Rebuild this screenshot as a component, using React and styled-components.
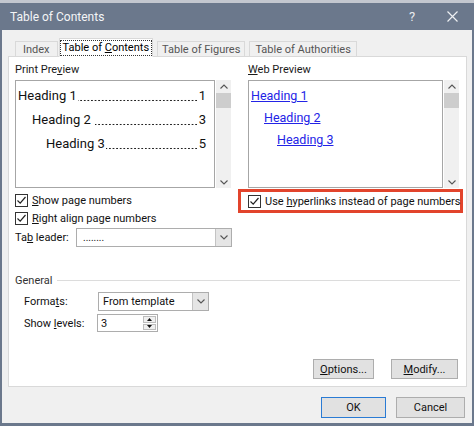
import React from "react";
import styled, { createGlobalStyle } from "styled-components";

const GlobalStyle = createGlobalStyle`
  html, body { margin: 0; padding: 0; background: #fff; }
  body {
    font-family: "Segoe UI", Roboto, "Noto Sans", sans-serif;
    font-size: 11px;
    color: #000;
  }
  * { box-sizing: border-box; }
`;

const Window = styled.div`
  width: 474px;
  height: 426px;
  display: flex;
  flex-direction: column;
  background: #6b788c;
  border-top: 3px solid #c3c7cf;
  padding: 0 2px 3px 2px;
`;

const TitleBar = styled.div`
  height: 27px;
  display: flex;
  align-items: center;
  padding-left: 8px;
  color: #f4f5f7;
  font-size: 12px;
`;

const TitleText = styled.div`
  flex: 1;
`;

const TitleButton = styled.div`
  width: 40px;
  height: 27px;
  display: flex;
  align-items: center;
  justify-content: center;
  color: #e8eaee;
  font-size: 13px;
`;

const Body = styled.div`
  flex: 1;
  background: #f0f0f0;
  display: flex;
  flex-direction: column;
  padding: 0 5px 0 6px;
`;

const TabRow = styled.div`
  display: flex;
  align-items: flex-end;
  height: 26px;
  padding-left: 7px;
  position: relative;
  z-index: 1;
`;

const Tab = styled.div`
  height: ${(p) => (p.$active ? "19px" : "15px")};
  padding: 0 ${(p) => p.$px}px;
  margin-right: ${(p) => p.$mr}px;
  display: flex;
  align-items: center;
  background: ${(p) => (p.$active ? "#fff" : "#f0f0f0")};
  border: 1px solid #d9d9d9;
  border-bottom: ${(p) => (p.$active ? "1px solid #fff" : "none")};
  color: ${(p) => (p.$active ? "#000" : "#555")};
  margin-bottom: ${(p) => (p.$active ? "-1px" : "0")};
`;

const FocusText = styled.span`
  outline: 1px dotted #333;
  outline-offset: 0px;
  padding: 0 2px;
  line-height: 14px;
`;

const U = styled.span`
  text-decoration: underline;
`;

const Panel = styled.div`
  height: 331px;
  background: #fff;
  border: 1px solid #d9d9d9;
  padding: 5px 6px 0 6px;
  display: flex;
  flex-direction: column;
`;

const TopSection = styled.div`
  display: flex;
  height: 208px;
`;

const LeftCol = styled.div`
  width: 217px;
  display: flex;
  flex-direction: column;
`;

const RightCol = styled.div`
  flex: 1;
  display: flex;
  flex-direction: column;
`;

const Divider = styled.div`
  width: 1px;
  background: #c9c9c9;
  margin: 3px 8px 0 8px;
`;

const SectionLabel = styled.div`
  height: 16px;
  line-height: 16px;
  margin-bottom: 2px;
  color: #1a1a1a;
`;

const PreviewRow = styled.div`
  display: flex;
  height: 108px;
`;

const PreviewBox = styled.div`
  width: ${(p) => p.$w}px;
  border: 1px solid #a6a6a6;
  padding: ${(p) => p.$pt}px 8px 0 2px;
  font-size: 13px;
`;

const PrintLine = styled.div`
  display: flex;
  align-items: baseline;
  line-height: 24px;
  padding-left: ${(p) => p.$indent}px;
  white-space: nowrap;
  color: #111;
`;

const Leader = styled.span`
  flex: 1;
  align-self: flex-end;
  height: 9px;
  margin: 0 1px 0 ${(p) => p.$ml || 1}px;
  background-image: radial-gradient(circle, #222 0.75px, transparent 1.1px);
  background-size: 3.6px 3px;
  background-repeat: repeat-x;
  background-position: right 0 top 0;
`;

const WebLine = styled.div`
  line-height: 22px;
  padding-left: ${(p) => p.$indent}px;
  font-size: 12.5px;
`;

const Link = styled.span`
  color: #2323e6;
  text-decoration: underline;
`;

const Scrollbar = styled.div`
  width: 15px;
  margin-left: 1px;
  background: #f0f0f0;
  display: flex;
  flex-direction: column;
  align-items: center;
  justify-content: space-between;
  padding: 4px 0 3px;
`;

const ScrollTop = styled.div`
  display: flex;
  flex-direction: column;
  align-items: center;
  width: 100%;
`;

const Thumb = styled.div`
  width: 100%;
  height: 15px;
  margin-top: 4px;
  background: #cdcdcd;
`;

const CheckRow = styled.label`
  display: flex;
  align-items: center;
  height: 18px;
  margin-top: ${(p) => p.$mt || 0}px;
  white-space: nowrap;
  color: #111;
`;

const Box = styled.span`
  width: 13px;
  height: 13px;
  border: 1px solid #333;
  background: #fff;
  display: flex;
  align-items: center;
  justify-content: center;
  margin-right: 4px;
  flex-shrink: 0;
`;

const FieldRow = styled.div`
  display: flex;
  align-items: center;
  height: ${(p) => p.$h}px;
  margin-top: ${(p) => p.$mt}px;
  padding-left: ${(p) => p.$pl || 0}px;
  color: #111;
`;

const FieldLabel = styled.div`
  width: ${(p) => p.$w}px;
  flex-shrink: 0;
`;

const Select = styled.div`
  width: ${(p) => p.$w}px;
  height: 100%;
  border: 1px solid #adadad;
  background: #fff;
  display: flex;
  align-items: stretch;
`;

const SelectValue = styled.div`
  flex: 1;
  display: flex;
  align-items: center;
  padding-left: ${(p) => p.$pl || 4}px;
  color: #111;
  font-size: ${(p) => p.$fs || 11}px;
`;

const SelectButton = styled.div`
  width: 16px;
  background: #e5e5e5;
  border-left: 1px solid #c3c3c3;
  display: flex;
  align-items: center;
  justify-content: center;
`;

const Highlight = styled.div`
  margin: 1px -2px 0 -10px;
  height: 24px;
  border: 3px solid #e2442c;
  padding-left: 7px;
  display: flex;
  align-items: center;
`;

const GeneralRow = styled.div`
  display: flex;
  align-items: center;
  height: 16px;
  margin-top: 2px;
  color: #333;
`;

const GroupLine = styled.div`
  flex: 1;
  height: 1px;
  background: #dcdcdc;
  margin-left: 5px;
`;

const Spin = styled.div`
  width: 61px;
  height: 100%;
  border: 1px solid #adadad;
  display: flex;
`;

const SpinValue = styled.div`
  flex: 1;
  display: flex;
  align-items: center;
  padding-left: 3px;
`;

const SpinButtons = styled.div`
  width: 15px;
  display: flex;
  flex-direction: column;
  padding: 1px;
  gap: 1px;
`;

const SpinBtn = styled.div`
  flex: 1;
  border: 1px solid #bdbdbd;
  background: #f0f0f0;
  display: flex;
  align-items: center;
  justify-content: center;
`;

const ButtonRow = styled.div`
  display: flex;
  justify-content: flex-end;
  gap: ${(p) => p.$gap}px;
  margin-top: ${(p) => p.$mt}px;
  padding-right: 2px;
`;

const Button = styled.div`
  width: ${(p) => p.$w}px;
  height: ${(p) => p.$h || 20}px;
  background: #e1e1e1;
  border: 1px solid ${(p) => (p.$default ? "#2a7bd4" : "#adadad")};
  display: flex;
  align-items: center;
  justify-content: center;
  color: #111;
`;

const Footer = styled.div`
  padding-top: 10px;
`;

const Check = () => (
  <Box>
    <svg width="11" height="11" viewBox="0 0 11 11">
      <polyline points="1.5,5.5 4.2,8.2 9.5,2" fill="none" stroke="#222" strokeWidth="1.2" />
    </svg>
  </Box>
);

const Chevron = ({ up }) => (
  <svg width="8" height="5" viewBox="0 0 8 5">
    <polyline
      points={up ? "0.5,4.5 4,1 7.5,4.5" : "0.5,0.5 4,4 7.5,0.5"}
      fill="none"
      stroke="#555"
      strokeWidth="1.1"
    />
  </svg>
);

const Tri = ({ up }) => (
  <svg width="5" height="3" viewBox="0 0 5 3">
    <polygon points={up ? "0,3 2.5,0 5,3" : "0,0 2.5,3 5,0"} fill="#111" />
  </svg>
);

const ScrollBar = () => (
  <Scrollbar>
    <ScrollTop>
      <Chevron up />
      <Thumb />
    </ScrollTop>
    <Chevron />
  </Scrollbar>
);

export default function App() {
  return (
    <>
      <GlobalStyle />
      <Window>
        <TitleBar>
          <TitleText>Table of Contents</TitleText>
          <TitleButton>?</TitleButton>
          <TitleButton>
            <svg width="11" height="11" viewBox="0 0 11 11">
              <path d="M0.5 0.5 L10.5 10.5 M10.5 0.5 L0.5 10.5" stroke="#eef0f3" strokeWidth="1.2" />
            </svg>
          </TitleButton>
        </TitleBar>
        <Body>
          <TabRow>
            <Tab $px={7} $mr={1}>Index</Tab>
            <Tab $active $px={1} $mr={4}>
              <FocusText>
                Table of <U>C</U>ontents
              </FocusText>
            </Tab>
            <Tab $px={4} $mr={4}>Table of Figures</Tab>
            <Tab $px={5} $mr={0}>Table of Authorities</Tab>
          </TabRow>
          <Panel>
            <TopSection>
              <LeftCol>
                <SectionLabel>
                  Print Pre<U>v</U>iew
                </SectionLabel>
                <PreviewRow>
                  <PreviewBox $w={200} $pt={3}>
                    <PrintLine $indent={0}>
                      <span>Heading 1</span>
                      <Leader />
                      <span>1</span>
                    </PrintLine>
                    <PrintLine $indent={14}>
                      <span>Heading 2</span>
                      <Leader $ml={4} />
                      <span>3</span>
                    </PrintLine>
                    <PrintLine $indent={28}>
                      <span>Heading 3</span>
                      <Leader />
                      <span>5</span>
                    </PrintLine>
                  </PreviewBox>
                  <ScrollBar />
                </PreviewRow>
                <CheckRow $mt={3}>
                  <Check />
                  <span>
                    <U>S</U>how page numbers
                  </span>
                </CheckRow>
                <CheckRow>
                  <Check />
                  <span>
                    <U>R</U>ight align page numbers
                  </span>
                </CheckRow>
                <FieldRow $h={19} $mt={1}>
                  <FieldLabel $w={61}>
                    Ta<U>b</U> leader:
                  </FieldLabel>
                  <Select $w={156}>
                    <SelectValue $pl={6} $fs={10}>
                      ........
                    </SelectValue>
                    <SelectButton>
                      <Chevron />
                    </SelectButton>
                  </Select>
                </FieldRow>
              </LeftCol>
              <Divider />
              <RightCol>
                <SectionLabel>
                  <U>W</U>eb Preview
                </SectionLabel>
                <PreviewRow>
                  <PreviewBox $w={195} $pt={4}>
                    <WebLine $indent={0}>
                      <Link>Heading 1</Link>
                    </WebLine>
                    <WebLine $indent={13}>
                      <Link>Heading 2</Link>
                    </WebLine>
                    <WebLine $indent={26}>
                      <Link>Heading 3</Link>
                    </WebLine>
                  </PreviewBox>
                  <ScrollBar />
                </PreviewRow>
                <Highlight>
                  <CheckRow>
                    <Check />
                    <span>
                      Use <U>h</U>yperlinks instead of page numbers
                    </span>
                  </CheckRow>
                </Highlight>
              </RightCol>
            </TopSection>
            <GeneralRow>
              General
              <GroupLine />
            </GeneralRow>
            <FieldRow $h={19} $mt={4} $pl={9}>
              <FieldLabel $w={74}>
                Forma<U>t</U>s:
              </FieldLabel>
              <Select $w={111}>
                <SelectValue>From template</SelectValue>
                <SelectButton>
                  <Chevron />
                </SelectButton>
              </Select>
            </FieldRow>
            <FieldRow $h={18} $mt={3} $pl={9}>
              <FieldLabel $w={73}>
                Show <U>l</U>evels:
              </FieldLabel>
              <Spin>
                <SpinValue>3</SpinValue>
                <SpinButtons>
                  <SpinBtn>
                    <Tri up />
                  </SpinBtn>
                  <SpinBtn>
                    <Tri />
                  </SpinBtn>
                </SpinButtons>
              </Spin>
            </FieldRow>
            <ButtonRow $gap={17} $mt={27}>
              <Button $w={61}>
                <span>
                  <U>O</U>ptions...
                </span>
              </Button>
              <Button $w={67}>
                <span>
                  <U>M</U>odify...
                </span>
              </Button>
            </ButtonRow>
          </Panel>
          <Footer>
            <ButtonRow $gap={10} $mt={0}>
              <Button $w={65} $h={21} $default>
                OK
              </Button>
              <Button $w={69} $h={21}>
                Cancel
              </Button>
            </ButtonRow>
          </Footer>
        </Body>
      </Window>
    </>
  );
}
